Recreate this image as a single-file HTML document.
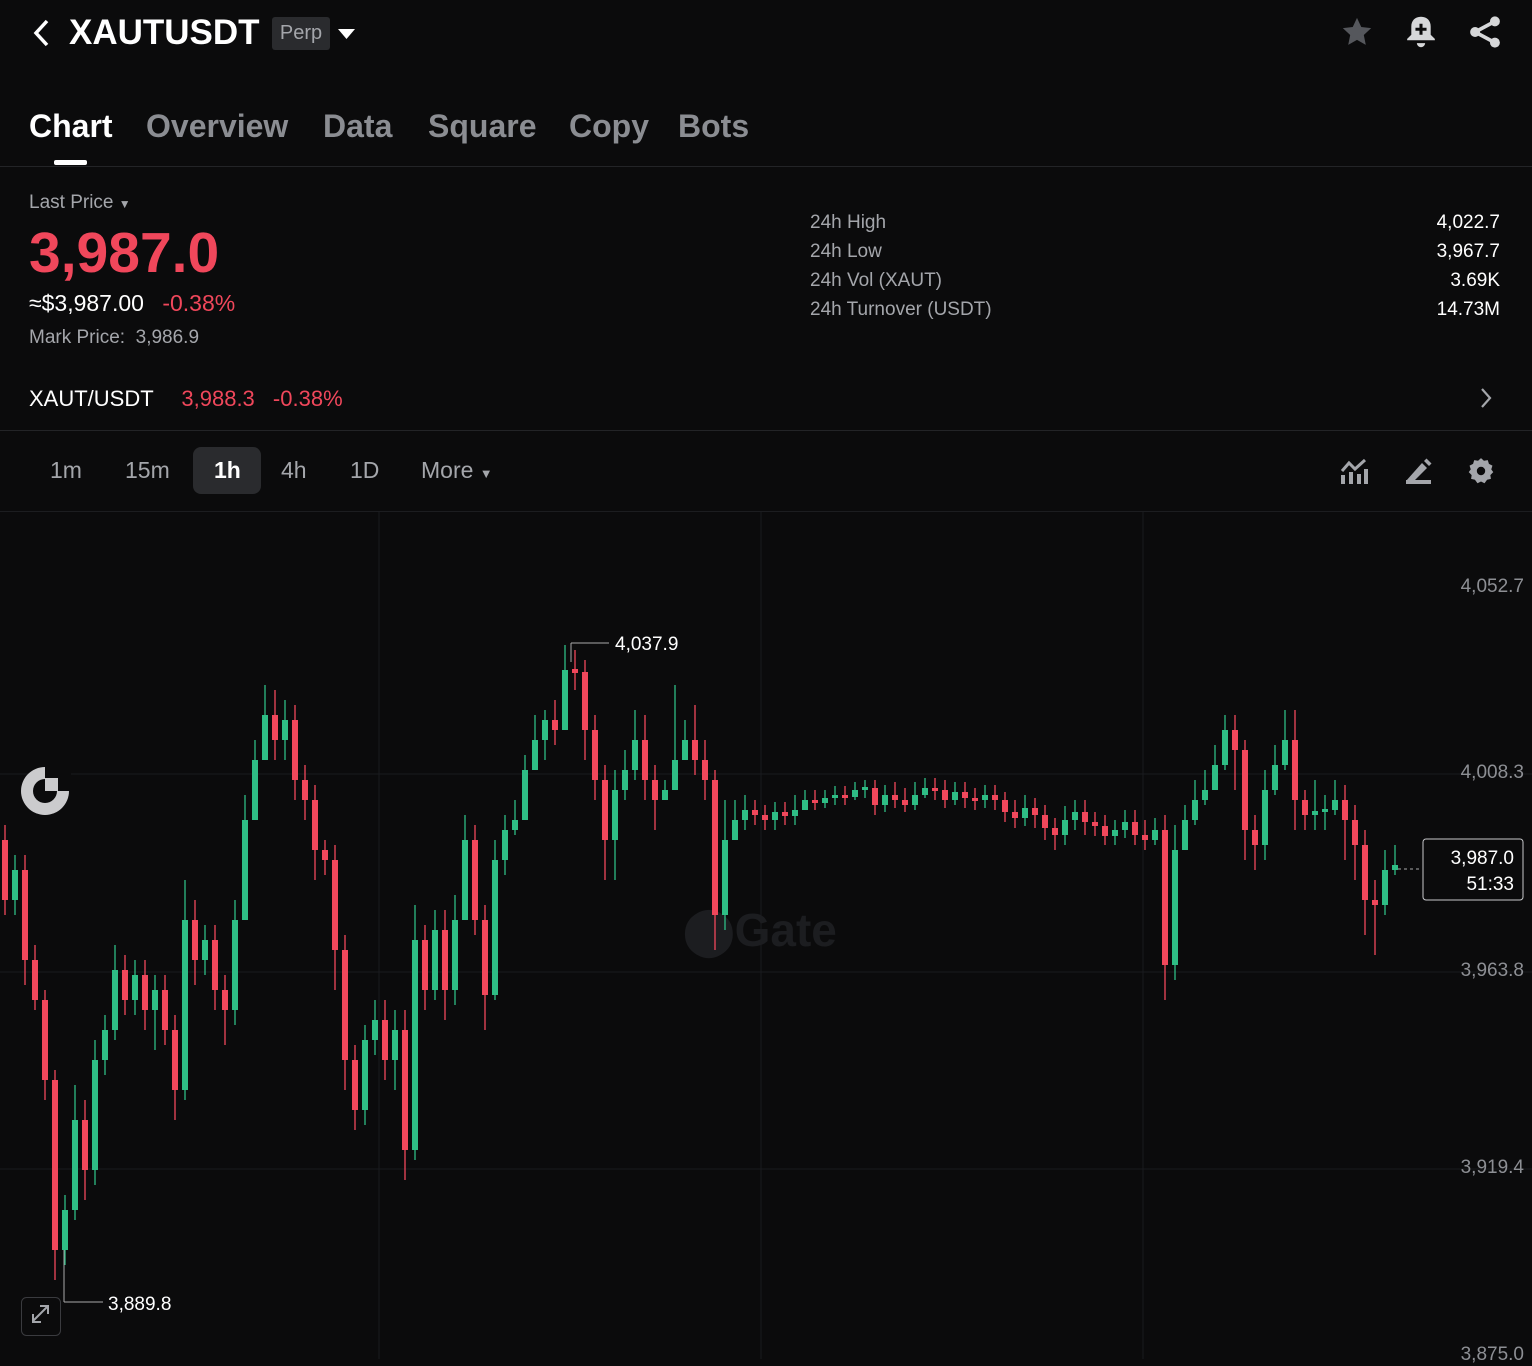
<!DOCTYPE html>
<html><head><meta charset="utf-8">
<style>
*{margin:0;padding:0;box-sizing:border-box}
body{width:1532px;height:1359px;background:#0b0b0c;color:#fff;font-family:"Liberation Sans",sans-serif;position:relative;overflow:hidden}
.abs{position:absolute;white-space:nowrap}
.tab{position:absolute;top:108px;font-size:32px;font-weight:bold;color:#8b8d92}
.lbl{color:#a4a6ab;font-size:19px}
.val{color:#fff;font-size:19px;text-align:right}
.tf{position:absolute;top:457px;font-size:23px;color:#a4a6ab}
.red{color:#f0475b}
.pl{position:absolute;right:8px;font-size:19px;color:#8d8f94}
</style></head><body>
<svg class="abs" style="left:30px;top:18px" width="22" height="30" viewBox="0 0 22 30"><path d="M17 3 L6 15 L17 27" stroke="#fff" stroke-width="3.5" fill="none"/></svg>
<div class="abs" style="left:69px;top:13px;font-size:35px;font-weight:bold">XAUTUSDT</div>
<div class="abs" style="left:272px;top:17px;width:58px;height:33px;background:#2a2b2e;border-radius:3px;color:#a4a6ab;font-size:20px;line-height:33px;text-align:center">Perp</div>
<svg class="abs" style="left:338px;top:28px" width="17" height="12"><path d="M0 1H17L8.5 11Z" fill="#fff"/></svg>
<svg class="abs" style="left:1339px;top:15px" width="36" height="34" viewBox="0 0 24 24"><path d="M12 2l3 6.5 7 .8-5.2 4.8 1.4 7L12 17.6 5.8 21.1l1.4-7L2 9.3l7-.8z" fill="#55575c"/></svg>
<svg class="abs" style="left:1404px;top:14px" width="34" height="36" viewBox="0 0 24 26"><path d="M12 2c4.5 0 7 3 7 7v6l3 3v1H2v-1l3-3V9c0-4 2.5-7 7-7z" fill="#d6d7d9"/><path d="M9 21a3 3 0 006 0z" fill="#d6d7d9"/><path d="M12 7v8M8 11h8" stroke="#0b0b0c" stroke-width="2.2"/></svg>
<svg class="abs" style="left:1467px;top:15px" width="36" height="34" viewBox="0 0 24 24"><circle cx="19" cy="4.5" r="3.5" fill="#d6d7d9"/><circle cx="5" cy="12" r="3.5" fill="#d6d7d9"/><circle cx="19" cy="19.5" r="3.5" fill="#d6d7d9"/><path d="M19 4.5L5 12L19 19.5" stroke="#d6d7d9" stroke-width="2.6" fill="none"/></svg>
<div class="tab" style="left:29px;color:#fff">Chart</div>
<div class="tab" style="left:146px">Overview</div>
<div class="tab" style="left:323px">Data</div>
<div class="tab" style="left:428px">Square</div>
<div class="tab" style="left:569px">Copy</div>
<div class="tab" style="left:678px">Bots</div>
<div class="abs" style="left:54px;top:160px;width:33px;height:5px;background:#fff;border-radius:2px"></div>
<div class="abs" style="left:0;top:166px;width:1532px;height:1px;background:#232427"></div>
<div class="abs lbl" style="left:29px;top:192px">Last Price <span style="font-size:12px">▼</span></div>
<div class="abs red" style="left:29px;top:220px;font-size:57px;font-weight:bold">3,987.0</div>
<div class="abs" style="left:29px;top:290px;font-size:23px">≈$3,987.00 <span class="red" style="margin-left:12px">-0.38%</span></div>
<div class="abs lbl" style="left:29px;top:327px">Mark Price:&nbsp; 3,986.9</div>
<div class="abs lbl" style="left:810px;top:212px">24h High</div>
<div class="abs lbl" style="left:810px;top:241px">24h Low</div>
<div class="abs lbl" style="left:810px;top:270px">24h Vol (XAUT)</div>
<div class="abs lbl" style="left:810px;top:299px">24h Turnover (USDT)</div>
<div class="abs val" style="right:32px;top:212px">4,022.7</div>
<div class="abs val" style="right:32px;top:241px">3,967.7</div>
<div class="abs val" style="right:32px;top:270px">3.69K</div>
<div class="abs val" style="right:32px;top:299px">14.73M</div>
<div class="abs" style="left:29px;top:386px;font-size:22px">XAUT/USDT <span class="red" style="margin-left:22px">3,988.3</span> <span class="red" style="margin-left:12px">-0.38%</span></div>
<svg class="abs" style="left:1479px;top:387px" width="14" height="22"><path d="M3 2L11 11L3 20" stroke="#a4a6ab" stroke-width="2.2" fill="none"/></svg>
<div class="abs" style="left:0;top:430px;width:1532px;height:1px;background:#232427"></div>
<div class="abs" style="left:193px;top:447px;width:68px;height:47px;background:#2a2b2e;border-radius:8px"></div>
<div class="tf" style="left:50px">1m</div>
<div class="tf" style="left:125px">15m</div>
<div class="tf" style="left:214px;color:#fff;font-weight:bold">1h</div>
<div class="tf" style="left:281px">4h</div>
<div class="tf" style="left:350px">1D</div>
<div class="tf" style="left:421px">More <span style="font-size:13px">▼</span></div>
<svg class="abs" style="left:1339px;top:456px" width="30" height="30" viewBox="0 0 30 30"><path d="M3 15L10 7L16 13L26 4" stroke="#a4a6ab" stroke-width="3" fill="none"/><rect x="2" y="19" width="4" height="9" fill="#a4a6ab"/><rect x="10" y="16" width="4" height="12" fill="#a4a6ab"/><rect x="18" y="18" width="4" height="10" fill="#a4a6ab"/><rect x="25" y="13" width="4" height="15" fill="#a4a6ab"/></svg>
<svg class="abs" style="left:1403px;top:456px" width="30" height="30" viewBox="0 0 30 30"><path d="M3 25L19 7L24 12L11 25Z" fill="#a4a6ab"/><path d="M21 5L23.5 2.5L28.5 7.5L26 10Z" fill="#a4a6ab"/><rect x="3" y="24" width="25" height="4" fill="#a4a6ab"/></svg>
<svg class="abs" style="left:1467px;top:457px" width="28" height="28" viewBox="0 0 24 24"><path d="M12 1l2.5 2.2 3.3-.5 1 3.2 3 1.5-1 3.2L22.5 13 20 15.5l.5 3.3-3.3.7L15 22.5 12 21l-3 1.5-2.2-3-3.3-.7.5-3.3L1.5 13l1.7-2.4-1-3.2 3-1.5 1-3.2 3.3.5z" fill="#a4a6ab"/><circle cx="12" cy="12" r="3.6" fill="#0b0b0c"/></svg>
<div class="abs" style="left:0;top:511px;width:1532px;height:1px;background:#1c1d20"></div>
<svg class="abs" style="left:0;top:512px" width="1532" height="847" viewBox="0 512 1532 847">
<g stroke="#1a1b1e" stroke-width="1">
<line x1="379" y1="512" x2="379" y2="1359"/><line x1="761" y1="512" x2="761" y2="1359"/><line x1="1143" y1="512" x2="1143" y2="1359"/>
<line x1="0" y1="774" x2="1532" y2="774"/><line x1="0" y1="972" x2="1532" y2="972"/><line x1="0" y1="1169" x2="1532" y2="1169"/>
</g>
<text x="760" y="946" font-family="Liberation Sans" font-weight="bold" font-size="46" fill="#1c1d20" text-anchor="middle">⬤Gate</text>
<path stroke="#f0475b" stroke-width="1.3" fill="none" d="M5 825V915M25 855V985M35 945V1010M45 990V1100M55 1070V1280M85 1100V1200M125 955V1015M145 960V1030M165 975V1045M175 1015V1120M195 900V985M215 925V1010M225 975V1045M275 690V760M295 705V800M305 765V820M315 785V880M325 840V875M335 845V990M345 935V1090M355 1045V1130M385 1000V1080M405 1010V1180M425 925V1010M445 910V1020M475 825V935M485 905V1030M555 700V745M575 650V690M585 660V760M595 715V800M605 765V880M645 715V800M655 765V830M695 705V775M705 740V800M715 770V950M755 800V825M765 805V830M785 802V825M815 790V810M845 786V805M875 780V815M895 782V808M905 788V812M935 778V800M945 780V808M965 782V808M975 788V810M995 785V810M1005 792V822M1015 800V828M1035 798V828M1045 805V840M1055 818V850M1085 800V835M1095 812V836M1105 815V845M1135 810V845M1145 820V850M1165 815V1000M1235 715V790M1245 740V860M1255 815V870M1295 710V830M1305 790V830M1345 785V860M1355 805V880M1365 830V935M1375 880V955"/>
<path stroke="#f0475b" stroke-width="6" fill="none" d="M5 840V900M25 870V960M35 960V1000M45 1000V1080M55 1080V1250M85 1120V1170M125 970V1000M145 975V1010M165 990V1030M175 1030V1090M195 920V960M215 940V990M225 990V1010M275 715V740M295 720V780M305 780V800M315 800V850M325 850V860M335 860V950M345 950V1060M355 1060V1110M385 1020V1060M405 1030V1150M425 940V990M445 930V990M475 840V920M485 920V995M555 720V730M575 669V673M585 672V730M595 730V780M605 780V840M645 740V780M655 780V800M695 740V760M705 760V780M715 780V915M755 810V815M765 815V820M785 812V816M815 800V803M845 795V798M875 788V805M895 795V800M905 800V805M935 788V791M945 790V800M965 792V798M975 798V801M995 795V800M1005 800V812M1015 812V818M1035 808V815M1045 815V828M1055 828V835M1085 812V822M1095 822V826M1105 826V836M1135 822V835M1145 835V840M1165 830V965M1235 730V750M1245 750V830M1255 830V845M1295 740V800M1305 800V815M1345 800V820M1355 820V845M1365 845V900M1375 900V905"/>
<path stroke="#2ebd85" stroke-width="1.3" fill="none" d="M15 855V915M65 1195V1265M75 1085V1220M95 1040V1185M105 1015V1075M115 945V1040M135 960V1015M155 975V1050M185 880V1100M205 925V975M235 900V1025M245 795V830M255 740V775M265 685V730M285 700V760M365 1025V1125M375 1000V1055M395 1010V1090M415 905V1160M435 910V1000M455 895V1005M465 815V860M495 840V1000M505 815V875M515 800V835M525 755V790M535 715V755M545 710V760M565 645V690M615 770V880M625 750V800M635 710V780M665 780V800M675 685V790M685 720V760M725 800V930M735 800V840M745 795V830M775 802V830M795 795V825M805 790V808M825 790V808M835 786V805M855 782V800M865 780V798M885 785V812M915 782V810M925 778V798M955 782V805M985 785V808M1025 795V826M1065 806V845M1075 800V830M1115 820V845M1125 810V838M1155 818V845M1175 825V980M1185 805V850M1195 780V825M1205 770V805M1215 745V790M1225 715V770M1265 770V860M1275 745V795M1285 710V770M1315 780V830M1325 795V830M1335 780V815M1385 850V915M1395 845V875"/>
<path stroke="#2ebd85" stroke-width="6" fill="none" d="M15 870V900M65 1210V1250M75 1120V1210M95 1060V1170M105 1030V1060M115 970V1030M135 975V1000M155 990V1010M185 920V1090M205 940V960M235 920V1010M245 820V920M255 760V820M265 715V760M285 720V740M365 1040V1110M375 1020V1040M395 1030V1060M415 940V1150M435 930V990M455 920V990M465 840V920M495 860V995M505 830V860M515 820V830M525 770V820M535 740V770M545 720V740M565 670V730M615 790V840M625 770V790M635 740V770M665 790V800M675 760V790M685 740V760M725 840V915M735 820V840M745 810V820M775 812V820M795 810V816M805 800V810M825 798V803M835 795V798M855 790V797M865 787V790M885 795V805M915 795V805M925 788V795M955 792V800M985 795V800M1025 808V818M1065 820V835M1075 812V820M1115 830V836M1125 822V830M1155 830V840M1175 850V965M1185 820V850M1195 800V820M1205 790V800M1215 765V790M1225 730V765M1265 790V845M1275 765V790M1285 740V765M1315 811V815M1325 809V812M1335 800V810M1385 870V905M1395 865V870"/>
<line x1="571" y1="643" x2="609" y2="643" stroke="#aaa"/><line x1="571" y1="643" x2="571" y2="662" stroke="#aaa"/>
<text x="615" y="650" font-family="Liberation Sans" font-size="19" fill="#fff">4,037.9</text>
<line x1="64" y1="1250" x2="64" y2="1302" stroke="#aaa"/><line x1="64" y1="1302" x2="103" y2="1302" stroke="#aaa"/>
<text x="108" y="1310" font-family="Liberation Sans" font-size="19" fill="#fff">3,889.8</text>
<line x1="1398" y1="869" x2="1422" y2="869" stroke="#aaa" stroke-dasharray="3,3"/>
<rect x="1423" y="839" width="100" height="61" rx="3" fill="#0b0b0c" stroke="#c8c9cc"/>
<text x="1514" y="864" font-family="Liberation Sans" font-size="19" fill="#fff" text-anchor="end">3,987.0</text>
<text x="1514" y="890" font-family="Liberation Sans" font-size="19" fill="#fff" text-anchor="end">51:33</text>
<circle cx="45" cy="791" r="24" fill="#cbcbcd"/><circle cx="45" cy="791" r="12" fill="#0b0b0c"/><rect x="45" y="766" width="26" height="25" fill="#0b0b0c"/><rect x="45" y="778" width="13" height="13" fill="#cbcbcd"/>
<rect x="21.5" y="1297.5" width="39" height="38" rx="5" fill="#0b0b0c" stroke="#3a3b3f"/>
<path d="M33 1321l15-15M40 1306h8v8M33 1314v8h8" stroke="#a4a6ab" stroke-width="2" fill="none"/>
</svg>
<div class="pl" style="top:576px">4,052.7</div>
<div class="pl" style="top:762px">4,008.3</div>
<div class="pl" style="top:960px">3,963.8</div>
<div class="pl" style="top:1157px">3,919.4</div>
<div class="pl" style="top:1344px">3,875.0</div>
</body></html>
